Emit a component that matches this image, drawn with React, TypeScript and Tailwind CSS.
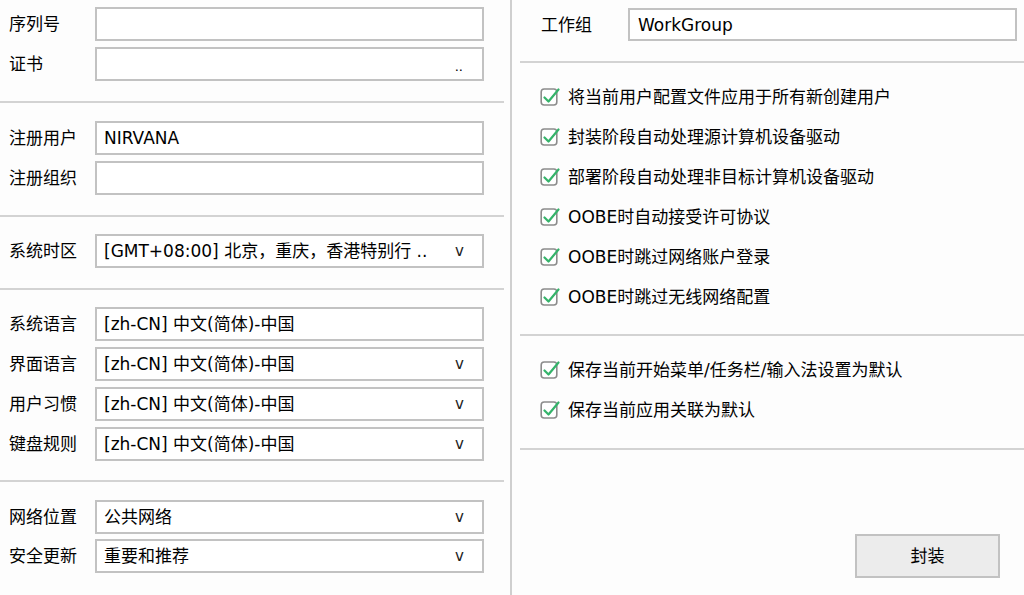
import React from "react";

const font = { fontFamily: '"DejaVu Sans", "Noto Sans CJK SC", sans-serif' };

function Field({
  label,
  value = "",
  dropdown = false,
  trailing,
}: {
  label: string;
  value?: string;
  dropdown?: boolean;
  trailing?: string;
}) {
  return (
    <div className="flex items-center h-[34px]">
      <div className="w-[95px] pl-[9px] text-[17px] leading-[20px] text-black whitespace-nowrap">
        {label}
      </div>
      <div className="w-[389px] h-[34px] border-2 border-[#c2c2c2] bg-white flex items-center justify-between pl-[7px] pr-[18px]">
        <span className="text-[17px] leading-[20px] text-black whitespace-nowrap">{value}</span>
        {dropdown && (
          <span className="text-[15px] leading-[16px] text-[#222] pb-[1px]">v</span>
        )}
        {trailing && (
          <span className="text-[13px] leading-[14px] text-black pt-[6px] pr-[1px]">{trailing}</span>
        )}
      </div>
    </div>
  );
}

function Sep({ className = "" }: { className?: string }) {
  return <div className={"h-[2px] bg-[#d3d3d3] " + className} />;
}

function Check({ label }: { label: string }) {
  return (
    <div className="flex items-center h-[40px] pl-[28px]">
      <svg width="20" height="20" viewBox="0 0 20 20" className="shrink-0">
        <rect x="1.2" y="2" width="15.6" height="16" rx="3" fill="white" stroke="#8c8c8c" strokeWidth="1.6" />
        <path d="M4.5 10.5 L8.5 14.5 L18.5 2.5" fill="none" stroke="#34b36a" strokeWidth="2.2" strokeLinecap="round" strokeLinejoin="round" />
      </svg>
      <span className="ml-[8px] text-[17px] leading-[20px] text-black whitespace-nowrap">{label}</span>
    </div>
  );
}

export default function App() {
  return (
    <div className="w-[1024px] h-[595px] bg-[#fdfdfd] flex overflow-hidden" style={font}>
      {/* Left panel */}
      <div className="w-[510px] flex flex-col">
        <div className="flex flex-col gap-[6px] pt-[7px] pb-[20px]">
          <Field label="序列号" />
          <Field label="证书" trailing=".." />
        </div>
        <Sep className="w-[504px]" />
        <div className="flex flex-col gap-[6px] pt-[18px] pb-[20px]">
          <Field label="注册用户" value="NIRVANA" />
          <Field label="注册组织" />
        </div>
        <Sep className="w-[504px]" />
        <div className="flex flex-col pt-[17px] pb-[20px]">
          <Field label="系统时区" value="[GMT+08:00] 北京，重庆，香港特别行 .." dropdown />
        </div>
        <Sep className="w-[504px]" />
        <div className="flex flex-col gap-[6px] pt-[17px] pb-[19px]">
          <Field label="系统语言" value="[zh-CN] 中文(简体)-中国" />
          <Field label="界面语言" value="[zh-CN] 中文(简体)-中国" dropdown />
          <Field label="用户习惯" value="[zh-CN] 中文(简体)-中国" dropdown />
          <Field label="键盘规则" value="[zh-CN] 中文(简体)-中国" dropdown />
        </div>
        <Sep className="w-[504px]" />
        <div className="flex flex-col gap-[5px] pt-[18px]">
          <Field label="网络位置" value="公共网络" dropdown />
          <Field label="安全更新" value="重要和推荐" dropdown />
        </div>
      </div>
      <div className="w-[2px] h-full bg-[#cfcfcf]" />
      {/* Right panel */}
      <div className="flex-1 flex flex-col">
        <div className="flex items-center pt-[8px] pb-[20px]">
          <div className="w-[116px] pl-[29px] text-[17px] leading-[20px] text-black">工作组</div>
          <div className="w-[389px] h-[33px] border-2 border-[#c2c2c2] bg-white flex items-center pl-[8px]">
            <span className="text-[17px] leading-[20px] text-black">WorkGroup</span>
          </div>
        </div>
        <Sep className="ml-[8px]" />
        <div className="flex flex-col pt-[14px] pb-[17px]">
          <Check label="将当前用户配置文件应用于所有新创建用户" />
          <Check label="封装阶段自动处理源计算机设备驱动" />
          <Check label="部署阶段自动处理非目标计算机设备驱动" />
          <Check label="OOBE时自动接受许可协议" />
          <Check label="OOBE时跳过网络账户登录" />
          <Check label="OOBE时跳过无线网络配置" />
        </div>
        <Sep className="ml-[8px]" />
        <div className="flex flex-col pt-[14px] pb-[18px]">
          <Check label="保存当前开始菜单/任务栏/输入法设置为默认" />
          <Check label="保存当前应用关联为默认" />
        </div>
        <Sep className="ml-[8px]" />
        <div className="flex-1 flex justify-end items-start pt-[84px] pr-[24px]">
          <button className="w-[145px] h-[44px] bg-[#ececec] border-2 border-[#c2c2c2] text-[17px] leading-[20px] text-black">
            封装
          </button>
        </div>
      </div>
    </div>
  );
}
